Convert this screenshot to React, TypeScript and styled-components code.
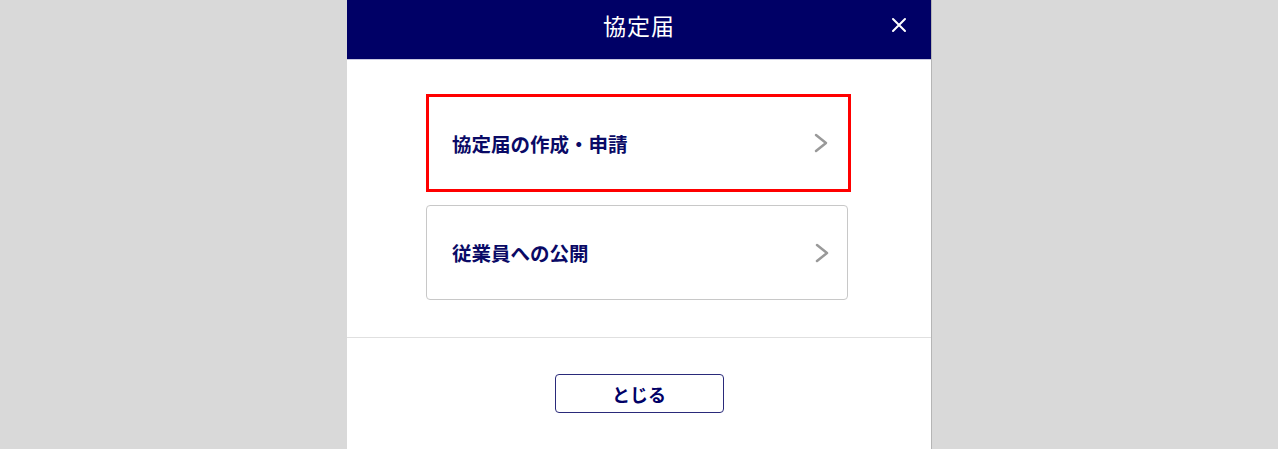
import React from 'react'
import styled, { createGlobalStyle } from 'styled-components'

const GlobalStyle = createGlobalStyle`
  html, body {
    margin: 0;
    padding: 0;
    height: 100%;
    overflow: hidden;
    background-color: #d9d9d9;
    font-family: "Noto Sans CJK JP", "Noto Sans", sans-serif;
  }
`

const Page = styled.div`
  display: flex;
  justify-content: center;
  height: 100vh;
`

const Modal = styled.div`
  width: 584px;
  background-color: white;
  display: flex;
  flex-direction: column;
  box-shadow: 1px 0 0 #b5b5b5;
  height: 520px;
`

const Header = styled.div`
  height: 60px;
  box-sizing: border-box;
  background-color: #000066;
  border-bottom: 1px solid #c9c9e0;
  display: flex;
  align-items: center;
  justify-content: center;
  padding-bottom: 10px;
  position: relative;
`

const Title = styled.h1`
  margin: 0;
  color: white;
  font-size: 23px;
  font-weight: 400;
  letter-spacing: 1px;
`

const CloseButton = styled.button`
  position: absolute;
  right: 24px;
  top: 17px;
  width: 16px;
  height: 16px;
  padding: 0;
  border: none;
  background: none;
  display: flex;
  cursor: pointer;
`

const Body = styled.div`
  display: flex;
  flex-direction: column;
  gap: 13px;
  padding: 34px 0 37px 79px;
  border-bottom: 1px solid #e0e0e0;
`

const Card = styled.a<{ $highlight?: boolean }>`
  box-sizing: border-box;
  display: flex;
  align-items: center;
  justify-content: space-between;
  width: ${(p) => (p.$highlight ? '425px' : '422px')};
  height: ${(p) => (p.$highlight ? '98px' : '95px')};
  padding: ${(p) => (p.$highlight ? '0 20px 0 23px' : '0 18px 0 25px')};
  border: ${(p) => (p.$highlight ? '3px solid #ff0000' : '1px solid #c8c8c8')};
  border-radius: ${(p) => (p.$highlight ? '0' : '4px')};
  color: #0a0a66;
  font-size: 19.5px;
  font-weight: 700;
  text-decoration: none;
  cursor: pointer;
`

const Footer = styled.div`
  display: flex;
  justify-content: center;
  padding-top: 36px;
`

const CloseAction = styled.button`
  box-sizing: border-box;
  width: 169px;
  height: 39px;
  border: 1.5px solid #2a2a7a;
  border-radius: 4px;
  background: white;
  color: #000066;
  font-family: "Noto Sans CJK JP", "Noto Sans", sans-serif;
  font-size: 18px;
  font-weight: 700;
  cursor: pointer;
`

const Chevron = () => (
  <svg width="14" height="20" viewBox="0 0 14 20" fill="none">
    <polyline
      points="2,2 12,10 2,18"
      stroke="#999999"
      strokeWidth="2.5"
      strokeLinecap="round"
      strokeLinejoin="round"
    />
  </svg>
)

const items = [
  { label: '協定届の作成・申請', highlight: true },
  { label: '従業員への公開', highlight: false },
]

const App = () => {
  return (
    <Page>
      <GlobalStyle />
      <Modal>
        <Header>
          <Title>協定届</Title>
          <CloseButton aria-label="close">
            <svg width="16" height="16" viewBox="0 0 16 16">
              <path
                d="M2 2 L14 14 M14 2 L2 14"
                stroke="white"
                strokeWidth="2"
                strokeLinecap="round"
              />
            </svg>
          </CloseButton>
        </Header>
        <Body>
          {items.map((item, key) => (
            <Card key={'item-' + key} $highlight={item.highlight}>
              <span>{item.label}</span>
              <Chevron />
            </Card>
          ))}
        </Body>
        <Footer>
          <CloseAction>とじる</CloseAction>
        </Footer>
      </Modal>
    </Page>
  )
}

export default App
